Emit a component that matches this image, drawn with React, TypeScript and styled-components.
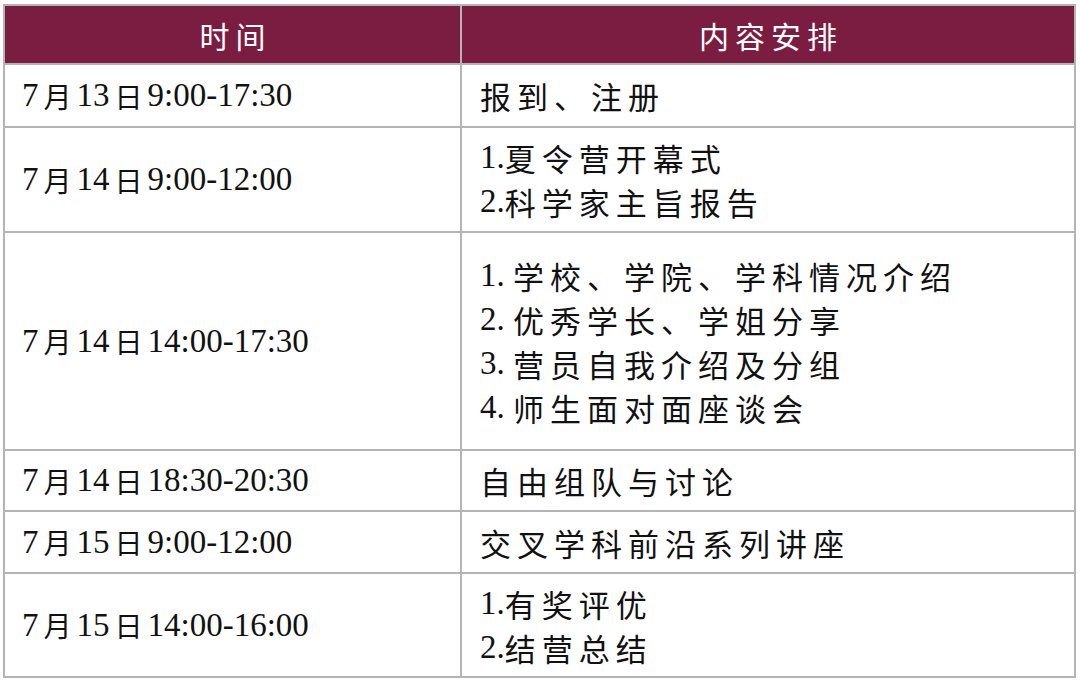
import React from "react";
import styled, { createGlobalStyle } from "styled-components";

const Global = createGlobalStyle`
  html, body { margin: 0; padding: 0; background: #ffffff; }
  body { width: 1080px; height: 696px; overflow: hidden; }
`;

const Page = styled.div`
  padding: 4px 0 0 3px;
`;

const Grid = styled.div`
  display: grid;
  grid-template-columns: 455px 612px;
  grid-template-rows: 57px 61px 103px 216px 59px 60px 102px;
  gap: 2px;
  padding: 2px;
  width: 1073px;
  box-sizing: border-box;
  background: #b4b4b4;
  font-family: "Liberation Serif", "Noto Sans CJK SC", serif;
  color: #111111;
`;

const HeadCell = styled.div`
  background: #7b1c41;
  color: #ffffff;
  display: flex;
  align-items: center;
  justify-content: center;
  font-family: "Noto Sans CJK SC", sans-serif;
  font-weight: 400;
  font-size: 30px;
  letter-spacing: 6px;
  padding-left: 6px;
`;

const TimeCell = styled.div`
  background: #ffffff;
  display: flex;
  align-items: center;
  padding-left: 17px;
  font-size: 33px;
  white-space: nowrap;
`;

const Cn = styled.span`
  font-family: "Noto Sans CJK SC", sans-serif;
  font-weight: 400;
  font-size: 28px;
  margin: 0 5px;
`;

const ContentCell = styled.div`
  background: #ffffff;
  display: flex;
  flex-direction: column;
  justify-content: center;
  padding-left: 18px;
`;

const Line = styled.div`
  height: 44px;
  display: flex;
  align-items: center;
  white-space: nowrap;
`;

const Num = styled.span`
  font-family: "Liberation Serif", serif;
  font-size: 33px;
  white-space: pre;
`;

const Text = styled.span`
  font-family: "Noto Sans CJK SC", sans-serif;
  font-weight: 400;
  font-size: 31px;
  letter-spacing: 6px;
`;

type Row = { month: string; day: string; time: string; lines: { num?: string; text: string }[] };

const rows: Row[] = [
  { month: "7", day: "13", time: "9:00-17:30", lines: [{ text: "报到、注册" }] },
  {
    month: "7",
    day: "14",
    time: "9:00-12:00",
    lines: [
      { num: "1.", text: "夏令营开幕式" },
      { num: "2.", text: "科学家主旨报告" },
    ],
  },
  {
    month: "7",
    day: "14",
    time: "14:00-17:30",
    lines: [
      { num: "1. ", text: "学校、学院、学科情况介绍" },
      { num: "2. ", text: "优秀学长、学姐分享" },
      { num: "3. ", text: "营员自我介绍及分组" },
      { num: "4. ", text: "师生面对面座谈会" },
    ],
  },
  { month: "7", day: "14", time: "18:30-20:30", lines: [{ text: "自由组队与讨论" }] },
  { month: "7", day: "15", time: "9:00-12:00", lines: [{ text: "交叉学科前沿系列讲座" }] },
  {
    month: "7",
    day: "15",
    time: "14:00-16:00",
    lines: [
      { num: "1.", text: "有奖评优" },
      { num: "2.", text: "结营总结" },
    ],
  },
];

export default function App() {
  return (
    <Page>
      <Global />
      <Grid>
        <HeadCell>时间</HeadCell>
        <HeadCell>内容安排</HeadCell>
        {rows.map((r, i) => (
          <React.Fragment key={i}>
            <TimeCell>
              {r.month}
              <Cn>月</Cn>
              {r.day}
              <Cn>日</Cn>
              {r.time}
            </TimeCell>
            <ContentCell>
              {r.lines.map((l, j) => (
                <Line key={j}>
                  {l.num && <Num>{l.num}</Num>}
                  <Text>{l.text}</Text>
                </Line>
              ))}
            </ContentCell>
          </React.Fragment>
        ))}
      </Grid>
    </Page>
  );
}
